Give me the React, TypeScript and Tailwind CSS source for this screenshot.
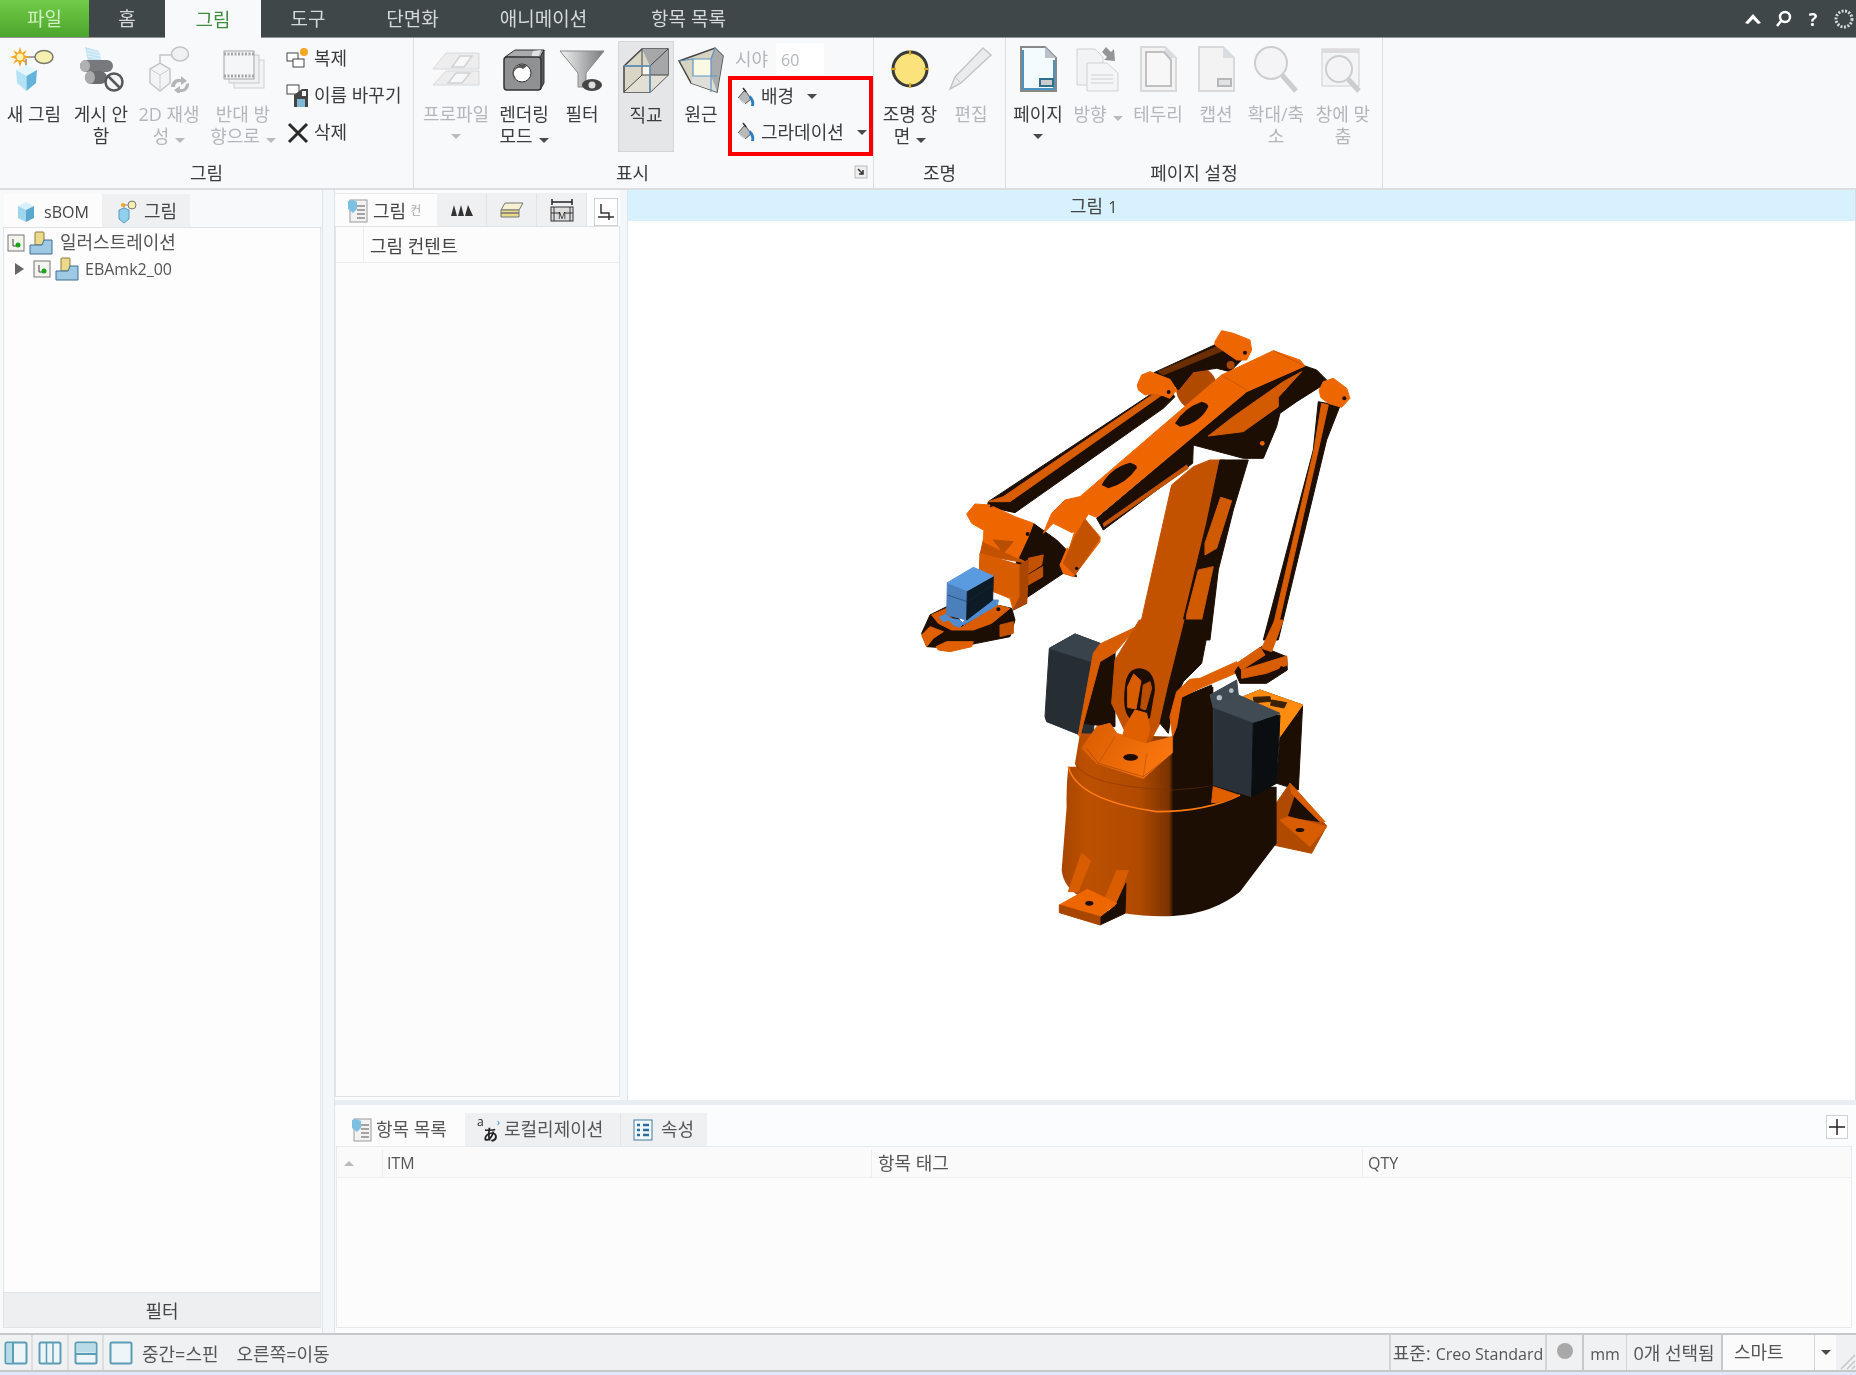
import type { ReactNode } from "react";

const Caret = ({ light }: { light?: boolean }) => (
  <span className={`inline-block w-0 h-0 border-x-[5px] border-t-[5px] border-x-transparent align-middle ${light ? "border-t-[#b9bcbe]" : "border-t-[#4a4a4a]"}`} />
);

/* ---------- ribbon icons (48x48 box) ---------- */
const NewFigureIcon = () => (
  <svg width="48" height="48" viewBox="0 0 48 48">
    <path d="M10 12h18M16 24V14" stroke="#888" strokeWidth="1.500" fill="none" />
    <ellipse cx="34" cy="12" rx="9" ry="6.500" fill="#f5f0b0" stroke="#7a7a6a" strokeWidth="1.500" />
    <path d="M6 25L16 20 27 25 16.500 31z" fill="#e4f6fd" />
    <path d="M6 25L16.500 31V46L7 38z" fill="#b3e2f6" />
    <path d="M27 25L16.500 31V46L26 38z" fill="#63b3da" />
    <path d="M10 2l2 6 5-3-3 5 6 2-6 2 3 5-5-3-2 6-2-6-5 3 3-5-6-2 6-2-3-5 5 3z" fill="#f5a623" />
    <circle cx="10" cy="12" r="3.500" fill="#fff3b0" />
  </svg>
);
const HideIcon = () => (
  <svg width="48" height="48" viewBox="0 0 48 48">
    <path d="M8 2l14 4 3 12-14-2z" fill="#bfe3f2" />
    <path d="M10 5l12 3M10 8l13 3M11 11l12 3" stroke="#e9f6fb" strokeWidth="1" />
    <rect x="3" y="15" width="33" height="12" rx="6" fill="#77797c" />
    <ellipse cx="8" cy="21" rx="5" ry="6" fill="#b0b2b4" />
    <rect x="8" y="26" width="22" height="13" rx="6.500" fill="#6a6c6f" />
    <ellipse cx="13" cy="32.500" rx="5" ry="6.500" fill="#a9abad" />
    <circle cx="37" cy="37" r="8.500" fill="#f4f4f4" stroke="#55585a" strokeWidth="2.500" />
    <path d="M31 31l12 12" stroke="#55585a" strokeWidth="2.500" />
  </svg>
);
const RegenIcon = () => (
  <svg width="48" height="48" viewBox="0 0 48 48" opacity="0.45">
    <path d="M5 24l10-6 10 6v14l-10 8-10-8z" fill="#eee" stroke="#888" strokeWidth="1.500" />
    <path d="M5 24l10 6 10-6M15 30v16" stroke="#999" fill="none" />
    <path d="M15 18V10h14" stroke="#888" strokeWidth="1.500" fill="none" />
    <ellipse cx="35" cy="9" rx="8.500" ry="7" fill="#e8e8e8" stroke="#888" strokeWidth="1.500" />
    <path d="M26 42a8 8 0 0 1 10-8v-3l6 5-6 4v-3a5 5 0 0 0-6 5zM44 38a8 8 0 0 1-9 9v3l-6-5 6-4v3a5 5 0 0 0 6-5z" fill="#666" />
  </svg>
);
const ReverseIcon = () => (
  <svg width="48" height="48" viewBox="0 0 48 48" opacity="0.5">
    <rect x="15" y="15" width="30" height="28" fill="#eee" stroke="#aaa" />
    <rect x="10" y="10" width="30" height="28" fill="#e8e8e8" stroke="#999" />
    <rect x="5" y="6" width="30" height="28" fill="#f4f4f4" stroke="#555" strokeWidth="1" />
    <path d="M5 9h30M5 31h30" stroke="#555" strokeWidth="3" strokeDasharray="2 1.500" />
  </svg>
);
const ProfileIcon = () => (
  <svg width="48" height="48" viewBox="0 0 48 48" opacity="0.4">
    <path d="M1 24L14 8H47V24z" fill="#ddd" stroke="#aaa" />
    <path d="M1 40L14 26H47V40z" fill="#ddd" stroke="#aaa" />
    <path d="M20 22l8-11h12l-8 11zM16 38l8-10h14l-8 10z" fill="#f5f5f5" stroke="#999" strokeWidth="1.500" />
  </svg>
);
const RenderIcon = () => (
  <svg width="48" height="48" viewBox="0 0 48 48">
    <path d="M5 12l10-7h29l-4 8z" fill="#a9abad" stroke="#333" strokeWidth="1" />
    <path d="M33 6l8-1-3 8-7 0z" fill="#e2e2e2" />
    <path d="M40 13l4-8v33l-4 7z" fill="#5a5c5e" stroke="#333" strokeWidth="1" />
    <rect x="4" y="12" width="37" height="33" rx="3" fill="#8f9193" stroke="#333" strokeWidth="1.500" />
    <circle cx="22" cy="28" r="9" fill="#fff" stroke="#333" strokeWidth="1" />
    <path d="M14 32a9 9 0 0 1 13-11l-4 3a5 5 0 0 0-7 9z" fill="#555" />
  </svg>
);
const FilterIcon = () => (
  <svg width="48" height="48" viewBox="0 0 48 48">
    <defs>
      <linearGradient id="fn" x1="0" x2="1" y1="0" y2="0">
        <stop offset="0" stopColor="#f4f4f4" />
        <stop offset="1" stopColor="#77797b" />
      </linearGradient>
    </defs>
    <path d="M2 6h44L28 28v14l-8 0V28z" fill="url(#fn)" stroke="#888" strokeWidth="1" />
    <ellipse cx="34" cy="40" rx="10" ry="6" fill="#444" />
    <circle cx="34" cy="40" r="3.500" fill="#ddd" />
  </svg>
);
const OrthoIcon = () => (
  <svg width="48" height="48" viewBox="0 0 48 48">
    <path d="M2 20L20 3h26v26L28 46H2z" fill="#d9d6c5" stroke="#444" strokeWidth="1.500" />
    <path d="M20 3h26L28 20zM46 3v26L28 46V20z" fill="#a5a7a9" />
    <path d="M2 46l18-17h26L28 46z" fill="#e2e0d5" />
    <rect x="20" y="20" width="8" height="9" fill="#fbf8e8" />
    <path d="M2 20h26v26M20 3v26M2 46l18-17h26M46 3L28 20" stroke="#444" strokeWidth="1" fill="none" />
    <path d="M2 20h26v26" stroke="#5f96c6" strokeWidth="1.500" fill="none" />
  </svg>
);
const PerspIcon = () => (
  <svg width="48" height="48" viewBox="0 0 48 48">
    <path d="M2 16L38 3l8 8-6 36L14 38z" fill="#d6d3c0" stroke="#444" strokeWidth="1.500" />
    <path d="M38 3l8 8-6 36-6-16V14z" fill="#a9abad" />
    <path d="M14 38l26 9-6-16H16z" fill="#dededa" />
    <rect x="16" y="14" width="18" height="17" fill="#fbf8e4" />
    <path d="M2 16l14-2h18v33M16 14V31h24M34 14l4-11" stroke="#5f96c6" strokeWidth="1.200" fill="none" />
  </svg>
);
const BucketIcon = () => (
  <svg width="20" height="22" viewBox="0 0 20 22">
    <path d="M2 12L9 4l6 9-6 5z" fill="#b9b9b9" stroke="#555" strokeWidth="1" />
    <path d="M7 2l3 4" stroke="#333" strokeWidth="1.500" />
    <path d="M14 9c3 3 5 6 4 11h-3c1-3 0-6-2-8z" fill="#2c7fc4" />
    <path d="M2 12l7 6" stroke="#fff" />
  </svg>
);
const LampIcon = () => (
  <svg width="48" height="48" viewBox="0 0 48 48">
    <circle cx="24" cy="24" r="17" fill="#fbe27a" stroke="#3a3a3a" strokeWidth="3" />
    <path d="M24 5v5M24 38v5M5 24h5M38 24h5" stroke="#d9a923" strokeWidth="2" />
  </svg>
);
const PencilIcon = () => (
  <svg width="48" height="48" viewBox="0 0 48 48" opacity="0.45">
    <path d="M36 3l8 7L14 38l-11 6 5-12z" fill="#ddd" stroke="#888" strokeWidth="1.500" />
    <path d="M8 32l6 6" stroke="#888" />
  </svg>
);
const PageIcon = ({ soft, kind }: { soft?: boolean; kind: "page" | "frame" | "caption" }) => (
  <svg width="48" height="48" viewBox="0 0 48 48" opacity={soft ? 0.5 : 1}>
    <path d="M7 2h24l11 11v33H7z" fill={kind === "page" ? "#f4fbff" : "#efefef"} stroke={kind === "page" ? "#888" : "#bbb"} strokeWidth="2" />
    <path d="M31 2v11h11z" fill="#b9c3c9" />
    {kind === "page" && <path d="M9 5v39h31V15" fill="none" stroke="#4c94bd" strokeWidth="2" />}
    {kind === "frame" && <path d="M12 7h18l7 8v26H12z" fill="#f7f7f7" stroke="#888" strokeWidth="2" />}
    {kind !== "frame" && <rect x="26" y="34" width="13" height="7" fill="#ccc" stroke={kind === "page" ? "#30708f" : "#777"} strokeWidth="2" />}
  </svg>
);
const OrientIcon = () => (
  <svg width="48" height="48" viewBox="0 0 48 48" opacity="0.5">
    <path d="M3 4h18l8 8v28H3z" fill="#eee" stroke="#aaa" />
    <path d="M13 18h20l11 10v18H13z" fill="#f2f2f2" stroke="#aaa" />
    <path d="M17 30h22M17 34h22M17 38h22" stroke="#aaa" />
    <path d="M32 2l5 5 3-3 1 12-11-1 3-3-5-5z" fill="#333" />
  </svg>
);
const ZoomIcon = ({ framed }: { framed?: boolean }) => (
  <svg width="48" height="48" viewBox="0 0 48 48" opacity="0.45">
    {framed && <rect x="3" y="4" width="37" height="37" fill="#eee" stroke="#bbb" strokeWidth="1.500" />}
    {framed && <rect x="3" y="4" width="37" height="4" fill="#bbb" />}
    <circle cx={framed ? 20 : 19} cy={framed ? 24 : 18} r={framed ? 13 : 16} fill="#f0f0f0" stroke="#999" strokeWidth="2" />
    <path d={framed ? "M29 34l11 12" : "M30 30l14 16"} stroke="#999" strokeWidth="5" />
  </svg>
);
const CopyIcon = () => (
  <svg width="24" height="24" viewBox="0 0 24 24">
    <rect x="1" y="6" width="11" height="8" fill="#fff" stroke="#444" />
    <rect x="7" y="12" width="11" height="8" fill="#fff" stroke="#444" />
    <circle cx="18" cy="5" r="4" fill="#f5a623" />
  </svg>
);
const RenameIcon = () => (
  <svg width="24" height="26" viewBox="0 0 24 26">
    <rect x="1" y="2" width="12" height="9" fill="#fff" stroke="#444" />
    <path d="M8 12l8-6h6v18H8z" fill="#444" />
    <rect x="11" y="16" width="8" height="8" fill="#7db8d6" />
    <rect x="16" y="8" width="4" height="5" fill="#fff" />
  </svg>
);

/* ---------- tree / tab icons ---------- */
const TreeCheck = () => (
  <svg width="18" height="18" viewBox="0 0 18 18">
    <rect x="1" y="1" width="16" height="16" fill="#f4f4ef" stroke="#777" />
    <path d="M6 5v7h4" stroke="#444" fill="none" />
    <circle cx="11" cy="11" r="2.500" fill="#1aa51a" />
  </svg>
);
const TreeAsm = () => (
  <svg width="24" height="24" viewBox="0 0 24 24">
    <rect x="6" y="1" width="9" height="13" rx="1" fill="#ecd98a" stroke="#8a7a40" />
    <path d="M1 14h12l2-5h8v14H1z" fill="#9ec9e4" stroke="#3f6f8f" />
  </svg>
);
const TabGem = () => (
  <svg width="20" height="22" viewBox="0 0 20 22">
    <path d="M2 5l8-4 8 4-8 4z" fill="#d8f0fb" />
    <path d="M2 5l8 4v12l-8-4z" fill="#9ed6ee" />
    <path d="M18 5l-8 4v12l8-4z" fill="#5aa7cf" />
  </svg>
);
const TabFigure = () => (
  <svg width="24" height="24" viewBox="0 0 24 24">
    <path d="M5 10l5-2 5 2v9l-5 4-5-4z" fill="#8fd0ec" stroke="#5a9cbc" />
    <path d="M10 8V5h4" stroke="#888" fill="none" />
    <circle cx="18" cy="5" r="4" fill="#f5efb0" stroke="#777" />
    <circle cx="9" cy="5" r="2" fill="#f5a623" />
  </svg>
);
const DocIcon = () => (
  <svg width="22" height="24" viewBox="0 0 22 24">
    <rect x="3" y="1" width="17" height="22" fill="#f2f2f2" stroke="#999" />
    <path d="M10 7h8M10 11h8M10 15h8M10 19h8" stroke="#555" />
    <path d="M1 2l5-1 4 2v7l-4 4-5-4z" fill="#7cc0e2" />
  </svg>
);
const TabCell = ({ children, w }: { children: ReactNode; w: string }) => (
  <div className={`${w} h-full flex items-center justify-center bg-[#eff0f2] border-r border-[#e3e4e6]`}>{children}</div>
);
const PaneIcon = ({ kind }: { kind: "left" | "mid" | "bottom" | "full" }) => (
  <svg width="24" height="24" viewBox="0 0 24 24">
    <rect x="1.500" y="1.500" width="21" height="21" rx="1.500" fill="#eef5f8" stroke="#5b9db5" strokeWidth="2" />
    {kind === "left" && <rect x="2.500" y="2.500" width="6" height="19" fill="#b9dbe8" />}
    {kind === "left" && <path d="M9 2v20" stroke="#5b9db5" strokeWidth="2" />}
    {kind === "mid" && <path d="M8.500 2v20M15 2v20" stroke="#5b9db5" strokeWidth="1.500" />}
    {kind === "bottom" && <path d="M2 13h20" stroke="#5b9db5" strokeWidth="2" />}
    {kind === "bottom" && <rect x="2.500" y="2.500" width="19" height="9" fill="#b9dbe8" />}
  </svg>
);

/* ---------- robot, traced from the reference in 3x crop coordinates ---------- */
const z4 = "translate(900 310) scale(0.3333)";
const z5 = "translate(1000 620) scale(0.3333)";
const z9 = "translate(910 540) scale(0.3333)";
const DK = "#1c0e02";
const MID = "#c25200";
const HI = "#ee6600";
const SOFT = "#d85c00";

const P = ({ d, f }: { d: string; f: string }) => <polygon points={d} fill={f} stroke={f} strokeWidth="3" strokeLinejoin="round" />;

function Robot() {
  return (
    <svg width="480" height="640" viewBox="900 310 480 640" className="block">
      <defs>
        <linearGradient id="baseG" gradientUnits="userSpaceOnUse" x1="185" x2="830" y1="0" y2="0">
          <stop offset="0" stopColor="#a84600" />
          <stop offset="0.12" stopColor="#bc5000" />
          <stop offset="0.36" stopColor="#b04a00" />
          <stop offset="0.5" stopColor="#7a3300" />
          <stop offset="0.52" stopColor={DK} />
          <stop offset="1" stopColor={DK} />
        </linearGradient>
        <linearGradient id="floorG" gradientUnits="userSpaceOnUse" x1="260" x2="520" y1="300" y2="460">
          <stop offset="0" stopColor="#d85c00" />
          <stop offset="1" stopColor="#ff7a10" />
        </linearGradient>
      </defs>

      {/* back link, disk, column, rod */}
      <g transform={z4}>
        <P d="795,225 825,260 790,295 345,608 262,590 265,575" f={DK} />
        <P d="265,575 310,560 790,232 800,245 330,575" f={SOFT} />
        <ellipse cx="890" cy="235" rx="62" ry="65" fill="#b04a00" />
        <P d="762,188 965,95 1040,135 990,185 950,175 880,185 835,240 810,210" f={DK} />
        <P d="775,185 975,100 985,115 790,195" f="#6a2e00" />
        <P d="945,95 965,62 1000,70 1050,90 1055,120 1040,150 1010,150 945,105" f={HI} />
        <circle cx="1035" cy="128" r="6" fill={DK} />
        <circle cx="992" cy="165" r="12" fill="#a84600" />
        <P d="712,225 725,195 750,185 810,208 830,240 810,265 770,250 735,255 715,240" f={HI} />
        <circle cx="806" cy="246" r="6" fill={DK} />
        <P d="815,525 880,470 930,450 975,450 940,620 860,900 840,990 700,990 720,950" f={MID} />
        <P d="960,450 1045,450 1000,600 955,780 930,990 830,990 850,930 920,640" f={DK} />
        <P d="962,562 995,572 950,715 915,735 915,700" f="#cf5a00" />
        <P d="895,780 940,770 905,930 860,955 860,915" f="#cf5a00" />
        <P d="1255,275 1320,288 1280,390 1135,990 1090,990 1240,420" f={DK} />
        <P d="1265,280 1285,285 1255,420 1125,990 1110,990 1242,420" f={SOFT} />
      </g>

      {/* lower part */}
      <g transform={z5}>
        <P d="148,85 225,42 300,70 280,340 240,345 140,305 135,290" f="#262d33" />
        <P d="148,85 225,42 300,70 275,125" f="#39434c" />
        <P d="730,230 780,210 908,255 895,510 830,490 840,350" f={DK} />
        <P d="730,230 780,210 908,255 840,350 838,285" f="#ff8c10" />
        <P d="760,232 810,230 813,244 763,248" f="#3a2200" />
        <P d="815,240 860,248 852,264 812,256" f="#3a2200" />
        <P d="825,555 870,490 980,618 935,700 820,675" f="#b04a00" />
        <P d="885,530 960,605 865,590" f={DK} />
        <P d="870,490 885,505 975,605 960,605 875,520" f={SOFT} />
        <P d="865,590 980,620 930,680 840,600" f={SOFT} />
        <ellipse cx="900" cy="630" rx="13" ry="6" fill={DK} />
        <path d="M205 440Q198 500 200 560L185 750Q190 800 240 830L370 880Q450 892 520 888Q640 880 720 815L830 670V500L720 500 640 440Z" fill="url(#baseG)" />
        <path d="M205 440Q230 540 470 575Q620 575 720 525" stroke="#ff7a10" strokeWidth="5" fill="none" />
        <path d="M240 340L225 430 240 470 400 505 520 510 640 495V200L545 230 515 350Z" fill="url(#baseG)" />
        <path d="M225 430Q260 500 520 510 600 505 640 495" stroke="#7a3300" strokeWidth="1.500" fill="none" />
        <P d="290,125 345,95 345,320 325,320 250,310" f={DK} />
        <P d="280,100 300,72 400,25 415,15 345,98 300,125 250,310 240,350 235,345" f={SOFT} />
        <P d="245,385 290,320 330,310 350,340 440,370 520,350 520,395 430,475 290,430" f="url(#floorG)" />
        <path d="M260 385L295 430 430 470 520 400" stroke="#8a3a00" fill="none" strokeWidth="1.500" />
        <path d="M295 430L345 350M430 470L440 400" stroke="#a84600" strokeWidth="1.500" fill="none" />
        <ellipse cx="392" cy="412" rx="22" ry="10" fill={DK} />
        <P d="418,0 555,0 510,200 480,310 450,365 380,345 335,250 345,120" f={MID} />
        <P d="555,0 630,0 605,130 550,185 520,250 505,340 480,310 505,200" f={DK} />
        <path d="M375 200Q380 145 420 145Q465 150 465 210L450 295 395 300Q365 280 375 200Z" fill={DK} />
        <P d="383,200 401,162 423,182 408,267 383,262" f={SOFT} />
        <P d="430,195 450,185 455,205 437,270 422,265" f="#b84e00" />
        <P d="405,270 440,280 450,330 438,368 368,348 376,318" f="#e06000" />
        <P d="545,232 635,195 640,495 520,505 520,350" f={DK} />
        <P d="510,290 530,215 570,178 600,175 710,125 718,155 600,205 545,232 530,320 518,350" f="#e06000" />
        <P d="718,135 785,80 860,110 862,150 800,190 720,190 705,155" f={DK} />
        <P d="710,130 780,82 795,105 725,150" f={SOFT} />
        <P d="725,150 790,130 860,108 862,135 800,160 725,175" f={SOFT} />
        <circle cx="845" cy="145" r="6" fill={DK} />
        <P d="785,85 825,0 850,0 815,95" f={SOFT} />
        <P d="630,225 710,180 715,225 640,265" f="#3f4a53" />
        <circle cx="658" cy="233" r="8" fill="#b8c2c8" />
        <circle cx="694" cy="212" r="7" fill="#b8c2c8" />
        <P d="640,500 715,525 675,545 635,548" f="#e06000" />
        <P d="640,265 715,225 840,280 760,310" f="#414b54" />
        <P d="640,265 760,310 755,530 640,495" f="#2a3138" />
        <P d="760,310 840,285 830,490 755,530" f="#0a0e10" />
        <P d="205,815 245,700 272,722 235,815" f={SOFT} />
        <P d="315,835 350,752 385,752 345,860" f={SOFT} />
        <P d="345,860 378,790 375,880 300,915 300,890" f={DK} />
        <P d="178,855 262,808 350,850 300,890" f={HI} />
        <P d="178,855 300,890 300,915 178,878" f="#a84600" />
        <ellipse cx="268" cy="850" rx="12" ry="7" fill={DK} />
      </g>

      {/* boom and wrist */}
      <g transform={z4}>
        <P d="1215,168 1250,180 1285,215 1190,275 1140,310 1130,350 1090,445 1030,445 880,405 878,460 610,660 590,625 1040,245" f={DK} />
        <P d="1205,185 1135,262 1135,290 1030,365 925,378 1000,320 1150,215" f="#d25a00" />
        <P d="610,640 860,465 865,475 612,650" f={MID} />
        <circle cx="1087" cy="400" r="7" fill={HI} />
        <P d="1258,240 1270,215 1300,205 1340,235 1350,265 1325,292 1285,280 1262,262" f={HI} />
        <circle cx="1333" cy="265" r="6" fill={DK} />
        <P d="965,195 1120,122 1200,150 1215,168 1040,245 590,622 565,612 555,628 470,595 495,570 540,560" f={HI} />
        <path d="M1040 240L965 195M1215 168L1120 122" stroke="#b84e00" strokeWidth="2" />
        <path d="M825 340Q850 295 905 275Q925 280 925 290Q900 340 840 350Z" fill={DK} />
        <path d="M605 525Q630 475 690 458Q715 465 710 475Q680 520 625 535Z" fill={DK} />
        <P d="400,640 470,690 500,720 530,800 490,790 385,860 340,890 350,745" f={DK} />
        <P d="385,745 430,735 425,765 385,790" f={MID} />
        <P d="385,795 428,770 428,800 385,825" f="#c25200" />
        <P d="470,595 555,628 600,680 600,695 520,800 490,790 480,765 520,670 460,640 430,670 455,610" f={HI} />
        <P d="555,628 600,685 525,795 490,760 525,680" f={MID} />
        <P d="495,700 520,668 505,715" f="#ffffff" />
        <circle cx="530" cy="775" r="5" fill={DK} />
        <P d="200,612 225,582 270,585 250,660 215,640" f={HI} />
        <P d="250,690 355,745 385,760 240,735" f={MID} />
        <P d="255,600 280,590 345,620 400,640 385,680 355,745 250,695" f={HI} />
        <P d="280,690 340,695 310,730" f="#b84e00" />
        <circle cx="383" cy="672" r="6" fill={DK} />
      </g>

      {/* gripper */}
      <g transform={z9}>
        <P d="210,40 330,75 355,60 350,190 310,210 300,175 250,155 208,90" f={SOFT} />
        <P d="330,75 355,60 350,190 310,210 330,170" f="#a84600" />
        <P d="60,225 110,200 160,250 260,195 305,205 315,240 300,290 200,310 130,325 50,320 35,280" f={DK} />
        <P d="65,225 110,205 115,225 155,262 260,195 300,205 245,250 190,270 125,270 85,250" f="#d95c00" />
        <P d="35,285 60,260 100,275 70,295 50,320" f="#e06000" />
        <P d="78,320 110,305 190,305 185,320 120,335 85,330" f="#e06000" />
        <P d="270,255 310,245 310,280 270,290" f={MID} />
        <circle cx="265" cy="208" r="6" fill={DK} />
        <P d="88,232 108,222 120,235 150,240 160,250 150,262 130,255 118,240 100,245" f="#4f8dd0" />
        <P d="245,180 265,180 262,195 160,255 160,245" f="#4f8dd0" />
        <P d="112,128 172,152 170,240 110,225" f="#4b80bd" />
        <P d="172,152 250,108 248,180 170,240" f="#0d1b26" />
        <P d="112,128 190,82 250,108 172,152" f="#5a9ade" />
        <path d="M112 165L172 185 250 135" stroke="#16283a" strokeWidth="1.500" fill="none" />
      </g>
    </svg>
  );
}

/* ---------- ribbon pieces ---------- */
function RibbonButton({ w, icon, lines, off, caret, caretLine }: { w: string; icon: ReactNode; lines: string[]; off?: boolean; caret?: boolean; caretLine?: boolean }) {
  return (
    <div className={`${w} shrink-0 flex flex-col items-center pt-[7px]`}>
      <div className="h-[48px] flex items-center justify-center">{icon}</div>
      <div className={`mt-[10px] text-[18px] leading-[22px] text-center whitespace-nowrap ${off ? "text-[#b4b7b9]" : "text-[#3c3c3c]"}`}>
        {lines.map((l, i) => (
          <div key={i}>
            {l}
            {caret && i === lines.length - 1 && <span className="ml-[6px] inline-flex"><Caret light={off} /></span>}
          </div>
        ))}
        {caretLine && <div className="h-[22px] flex items-center justify-center"><Caret light={off} /></div>}
      </div>
    </div>
  );
}
function Group({ w, label, children, launcher }: { w: string; label: string; children: ReactNode; launcher?: boolean }) {
  return (
    <div className={`${w} shrink-0 flex flex-col border-r border-[#dcdee0]`}>
      <div className="h-[118px] flex">{children}</div>
      <div className="relative flex-1 flex items-center justify-center pt-[2px] text-[18px] text-[#3c3c3c]">
        <span className={launcher ? "pr-[22px]" : ""}>{label}</span>
        {launcher && (
          <svg width="14" height="14" viewBox="0 0 14 14" className="absolute right-[5px] top-[9px]">
            <rect x="1" y="1" width="12" height="12" fill="#eee" stroke="#bbb" />
            <path d="M4 4l5 5M9 5v4H5" stroke="#333" strokeWidth="1.500" fill="none" />
          </svg>
        )}
      </div>
    </div>
  );
}

const tabs = [
  { t: "홈", w: "w-[76px]" },
  { t: "그림", w: "w-[96px]", on: true },
  { t: "도구", w: "w-[94px]" },
  { t: "단면화", w: "w-[115px]" },
  { t: "애니메이션", w: "w-[147px]" },
  { t: "항목 목록", w: "w-[143px]" },
];

export default function App() {
  return (
    <div className="w-[1856px] h-[1375px] overflow-hidden flex flex-col bg-[#f1f2f4] font-['Open_Sans','Noto_Sans_CJK_KR',sans-serif] blur-[0.6px] text-[#444]">
      {/* Title tabs */}
      <div className="h-[38px] flex bg-[#3f4749] border-b border-[#8f9496] text-[19px]">
        <div className="w-[89px] pt-[2px] flex items-center justify-center bg-gradient-to-b from-[#72cc48] to-[#4ba52c] text-[#d3efc3]">파일</div>
        {tabs.map((t) => (
          <div key={t.t} className={`${t.w} pt-[2px] flex items-center justify-center ${t.on ? "bg-[#f8f9fb] text-[#3d8d3d] h-[38px]" : "text-[#d6d9d9]"}`}>
            {t.t}
          </div>
        ))}
        <div className="ml-auto flex items-center pr-[2px] gap-[14px] text-white">
          <svg width="18" height="12" viewBox="0 0 18 12"><path d="M9 1l8 9-3 1-5-5-5 5-3-1z" fill="#fff" /></svg>
          <svg width="16" height="18" viewBox="0 0 16 18"><circle cx="9" cy="7" r="5" fill="none" stroke="#fff" strokeWidth="2.500" /><path d="M5 11l-4 5" stroke="#fff" strokeWidth="2.500" /></svg>
          <span className="w-[14px] text-center font-bold text-[18px] leading-none">?</span>
          <svg width="20" height="24" viewBox="0 0 20 24"><circle cx="10" cy="12" r="8" fill="none" stroke="#d5d8d8" strokeWidth="3" strokeDasharray="2 1.500" /></svg>
        </div>
      </div>

      {/* Ribbon */}
      <div className="h-[152px] shrink-0 flex bg-[#f8f9fb] border-b-2 border-[#dcdee0]">
        <Group w="w-[414px]" label="그림">
          <RibbonButton w="w-[68px]" icon={<NewFigureIcon />} lines={["새 그림"]} />
          <RibbonButton w="w-[66px]" icon={<HideIcon />} lines={["게시 안", "함"]} />
          <RibbonButton w="w-[70px]" icon={<RegenIcon />} lines={["2D 재생", "성"]} off caret />
          <RibbonButton w="w-[78px]" icon={<ReverseIcon />} lines={["반대 방", "향으로"]} off caret />
          <div className="pt-[2px] pl-[4px] flex flex-col text-[18px] text-[#3c3c3c]">
            <div className="h-[37px] flex items-center gap-[4px]"><CopyIcon /><span>복제</span></div>
            <div className="h-[37px] flex items-center gap-[4px]"><RenameIcon /><span>이름 바꾸기</span></div>
            <div className="h-[37px] flex items-center gap-[4px]">
              <svg width="24" height="24" viewBox="0 0 24 24"><path d="M3 3l18 18M21 3L3 21" stroke="#2a2a2a" strokeWidth="3" /></svg>
              <span>삭제</span>
            </div>
          </div>
        </Group>
        <Group w="w-[460px]" label="표시" launcher>
          <div className="w-[8px] shrink-0" />
          <RibbonButton w="w-[68px]" icon={<ProfileIcon />} lines={["프로파일"]} off caretLine />
          <RibbonButton w="w-[68px]" icon={<RenderIcon />} lines={["렌더링", "모드"]} caret />
          <RibbonButton w="w-[48px]" icon={<FilterIcon />} lines={["필터"]} />
          <div className="ml-[12px] mt-[3px] w-[56px] h-[111px] shrink-0 flex flex-col items-center pt-[4px] bg-[#e4e6e8] border border-[#d3d5d7]">
            <div className="h-[48px] flex items-center"><OrthoIcon /></div>
            <div className="mt-[10px] text-[18px] leading-[22px] text-[#3c3c3c]">직교</div>
          </div>
          <RibbonButton w="w-[54px]" icon={<PerspIcon />} lines={["원근"]} />
          <div className="w-[145px] shrink-0 pt-[5px] flex flex-col">
            <div className="h-[31px] flex items-center pl-[7px] text-[#b4b7b9]">
              <span className="w-[41px] text-[18px] pt-[3px]">시야</span>
              <span className="w-[48px] h-full flex items-center pl-[5px] pt-[3px] bg-white text-[16px]">60</span>
            </div>
            <div className="mt-[2px] h-[81px] border-[4px] border-[#fb0000] flex flex-col text-[18px] text-[#3c3c3c]">
              <div className="h-[34px] flex items-center pl-[4px] gap-[5px]"><BucketIcon /><span>배경</span><span className="ml-[8px] inline-flex"><Caret /></span></div>
              <div className="h-[37px] flex items-center pl-[4px] gap-[5px]"><BucketIcon /><span>그라데이션</span><span className="ml-[8px] inline-flex"><Caret /></span></div>
            </div>
          </div>
        </Group>
        <Group w="w-[132px]" label="조명">
          <RibbonButton w="w-[72px]" icon={<LampIcon />} lines={["조명 장", "면"]} caret />
          <RibbonButton w="w-[50px]" icon={<PencilIcon />} lines={["편집"]} off />
        </Group>
        <Group w="w-[377px]" label="페이지 설정">
          <RibbonButton w="w-[64px]" icon={<PageIcon kind="page" />} lines={["페이지"]} caretLine />
          <RibbonButton w="w-[56px]" icon={<OrientIcon />} lines={["방향"]} off caret />
          <RibbonButton w="w-[64px]" icon={<PageIcon kind="frame" soft />} lines={["테두리"]} off />
          <RibbonButton w="w-[52px]" icon={<PageIcon kind="caption" soft />} lines={["캡션"]} off />
          <RibbonButton w="w-[68px]" icon={<ZoomIcon />} lines={["확대/축", "소"]} off />
          <RibbonButton w="w-[66px]" icon={<ZoomIcon framed />} lines={["창에 맞", "춤"]} off />
        </Group>
      </div>

      {/* Main */}
      <div className="flex-1 min-h-0 flex bg-[#fbfcfd]">
        {/* Left panel */}
        <div className="w-[322px] shrink-0 flex flex-col pl-[3px] pr-[1px] pt-[4px] pb-[5px] bg-[#f8f9fa] text-[18px]">
          <div className="h-[33px] shrink-0 flex pl-[1px]">
            <div className="w-[98px] flex items-center pl-[12px] pt-[2px] gap-[8px] bg-[#fcfcfc] text-[16px]"><TabGem /><span>sBOM</span></div>
            <div className="w-[88px] flex items-center pl-[12px] pt-[2px] gap-[6px] bg-[#eff0f2]"><TabFigure /><span>그림</span></div>
          </div>
          <div className="flex-1 border border-[#e2e3e5] bg-[#fdfdfd] pt-[1px] pl-[3px] text-[#555]">
            <div className="h-[27px] flex items-center gap-[4px]">
              <TreeCheck /><TreeAsm /><span className="ml-[3px]">일러스트레이션</span>
            </div>
            <div className="h-[26px] flex items-center gap-[4px] pl-[6px]">
              <svg width="12" height="14" viewBox="0 0 12 14" className="mr-[4px]"><path d="M2 1l9 6-9 6z" fill="#666" /></svg>
              <TreeCheck /><TreeAsm /><span className="ml-[2px] text-[16px]">EBAmk2_00</span>
            </div>
          </div>
          <div className="h-[35px] shrink-0 flex items-center justify-center bg-[#eeeff1] border-x border-b border-[#e2e3e5] pt-[3px]">필터</div>
        </div>
        <div className="w-[13px] shrink-0 bg-[#f4f7fa] border-x border-[#dfe4e8]" />

        {/* Right side */}
        <div className="flex-1 min-w-0 flex flex-col">
          <div className="h-[910px] shrink-0 flex">
            {/* Figure contents */}
            <div className="w-[285px] shrink-0 flex flex-col pt-[3px] pb-[3px] text-[18px]">
              <div className="h-[33px] shrink-0 flex">
                <div className="w-[102px] flex items-center pl-[12px] pt-[2px] gap-[4px] bg-[#fcfcfc] border-t border-[#e8e9ea] whitespace-nowrap overflow-hidden">
                  <DocIcon /><span>그림</span><span className="text-[#aaa] text-[12px]">컨</span>
                </div>
                <TabCell w="w-[50px]">
                  <svg width="24" height="14" viewBox="0 0 24 14"><path d="M1 13l3-11 3 11zM8 13l3-11 3 11zM15 13l3-11 5 11z" fill="#333" /></svg>
                </TabCell>
                <TabCell w="w-[50px]">
                  <svg width="24" height="20" viewBox="0 0 24 20"><path d="M5 3h18l-4 7H1z" fill="#f6f1d0" stroke="#777" /><path d="M1 10h18v3H1zM1 13h18v4H1z" fill="#e9d98a" stroke="#777" /></svg>
                </TabCell>
                <TabCell w="w-[50px]">
                  <svg width="24" height="26" viewBox="0 0 24 26"><path d="M2 2v6M22 2v6M2 5h20" stroke="#222" strokeWidth="1.500" /><rect x="1" y="10" width="22" height="14" fill="#ddd" stroke="#333" /><path d="M1 16h8M15 16h8M4 10v14M20 10v14" stroke="#333" /><text x="12" y="22" fontSize="9" textAnchor="middle" fill="#222">M</text></svg>
                </TabCell>
                <div className="ml-[7px] w-[24px] h-[28px] mt-[5px] flex items-center justify-center bg-white border border-[#cfd1d3]">
                  <svg width="18" height="18" viewBox="0 0 18 18"><path d="M4 1v9h8v7M1 14h16" stroke="#333" strokeWidth="1.500" fill="none" /></svg>
                </div>
              </div>
              <div className="flex-1 border border-[#e2e3e5] bg-[#fcfcfc] flex flex-col">
                <div className="h-[36px] flex items-center border-b border-[#ececee] text-[#444]">
                  <span className="ml-[27px] h-full border-l border-[#ececee] pl-[6px] pt-[4px] flex items-center">그림 컨텐트</span>
                </div>
              </div>
            </div>
            <div className="w-[8px] shrink-0 bg-[#f4f7fa] border-r border-[#dfe4e8]" />

            {/* Viewport */}
            <div className="flex-1 min-w-0 flex flex-col bg-white border-r border-[#d9dbdd]">
              <div className="h-[31px] shrink-0 pt-[2px] bg-[#d8f1fe] text-[16px] text-[#444] flex items-center pl-[442px]">
                <span className="text-[18px]">그림</span><span className="ml-[5px]">1</span>
              </div>
              <div className="pt-[89px] pl-[272px]"><Robot /></div>
            </div>
          </div>

          {/* Item list */}
          <div className="flex-1 min-h-0 flex flex-col border-t-[5px] border-[#e8eef3] pt-[8px] pr-[4px] pl-[1px] pb-[5px] text-[18px] text-[#555]">
            <div className="h-[33px] shrink-0 flex items-stretch pl-[2px]">
              <div className="w-[127px] flex items-center pl-[13px] gap-[3px] bg-[#fcfcfc] whitespace-nowrap"><DocIcon /><span>항목 목록</span></div>
              <div className="w-[156px] flex items-center pl-[12px] gap-[3px] bg-[#eff0f2] border-r border-[#e3e4e6] whitespace-nowrap">
                <span className="relative w-[24px] h-[28px] shrink-0 text-[#222] leading-none">
                  <span className="absolute left-0 top-0 text-[12px]">a</span>
                  <span className="absolute right-[1px] top-[1px] text-[10px] text-[#2a7fc4]">›</span>
                  <span className="absolute left-[6px] top-[11px] text-[15px] font-bold">あ</span>
                </span>
                <span>로컬리제이션</span>
              </div>
              <div className="w-[86px] flex items-center pl-[12px] gap-[8px] bg-[#eff0f2]">
                <svg width="20" height="22" viewBox="0 0 20 22"><rect x="1" y="1" width="18" height="20" fill="#f5f8fa" stroke="#3f7f9f" /><path d="M4 6h3M4 11h3M4 16h3M10 6h6M10 11h6M10 16h6" stroke="#2a6f9f" strokeWidth="2.500" /></svg>
                <span>속성</span>
              </div>
              <div className="ml-auto w-[22px] h-[24px] mt-[2px] mr-[4px] flex items-center justify-center bg-white border border-[#cfd1d3]">
                <svg width="16" height="16" viewBox="0 0 16 16"><path d="M8 0v16M0 8h16" stroke="#222" strokeWidth="1.500" /></svg>
              </div>
            </div>
            <div className="flex-1 border border-[#e8e9ea] bg-[#fcfcfc]">
              <div className="h-[31px] flex items-center border-b border-[#ededef] bg-[#fafafa] pt-[2px]">
                <div className="w-[46px] h-full flex items-center pl-[7px] border-r border-[#ededef]">
                  <span className="inline-block w-0 h-0 border-x-[5px] border-b-[5px] border-x-transparent border-b-[#bbb]" />
                </div>
                <div className="w-[489px] h-full flex items-center pl-[4px] border-r border-[#ededef] text-[16px]">ITM</div>
                <div className="w-[491px] h-full flex items-center pl-[6px] border-r border-[#ededef]">항목 태그</div>
                <div className="flex-1 h-full flex items-center pl-[5px] text-[16px]">QTY</div>
              </div>
            </div>
          </div>
        </div>
      </div>

      {/* Status bar */}
      <div className="h-[39px] shrink-0 flex items-stretch bg-[#f0f1f3] border-t-2 border-b-2 border-[#c6c8ca] text-[18px] text-[#555]">
        <div className="w-[33px] flex items-center justify-center border-r-2 border-[#dcdee0]"><PaneIcon kind="left" /></div>
        <div className="w-[36px] flex items-center justify-center border-r-2 border-[#dcdee0]"><PaneIcon kind="mid" /></div>
        <div className="w-[35px] flex items-center justify-center border-r-2 border-[#dcdee0]"><PaneIcon kind="bottom" /></div>
        <div className="flex items-center pl-[5px]">
          <PaneIcon kind="full" />
          <span className="ml-[9px] pt-[3px]">중간=스핀</span>
          <span className="ml-[18px] pt-[3px]">오른쪽=이동</span>
        </div>
        <div className="ml-auto w-[158px] flex items-center justify-center border-x-2 border-[#d2d4d6] whitespace-nowrap pt-[2px]">
          표준:<span className="ml-[5px] text-[16px]">Creo Standard</span>
        </div>
        <div className="w-[37px] flex items-center justify-center border-r-2 border-[#c6c8ca]">
          <span className="w-[16px] h-[16px] rounded-full bg-[#a9a9a9] -mt-[4px]" />
        </div>
        <div className="w-[43px] flex items-center justify-center border-r border-[#d2d4d6] text-[16px] pt-[2px]">mm</div>
        <div className="w-[96px] flex items-center justify-center border-r-2 border-[#c6c8ca] whitespace-nowrap pt-[2px]">0개 선택됨</div>
        <div className="w-[92px] flex items-center pl-[11px] bg-[#fbfbfb] border-r border-[#d2d4d6]">스마트</div>
        <div className="w-[21px] flex items-center justify-center bg-[#fbfbfb]"><Caret /></div>
        <div className="w-[20px] flex items-end justify-end">
          <svg width="18" height="18" viewBox="0 0 18 18"><path d="M17 3L3 17M17 9l-8 8M17 14l-3 3" stroke="#c3c5c7" strokeWidth="1.500" /></svg>
        </div>
      </div>
      <div className="h-[3px] shrink-0 bg-[#dfe9f5]" />
    </div>
  );
}
